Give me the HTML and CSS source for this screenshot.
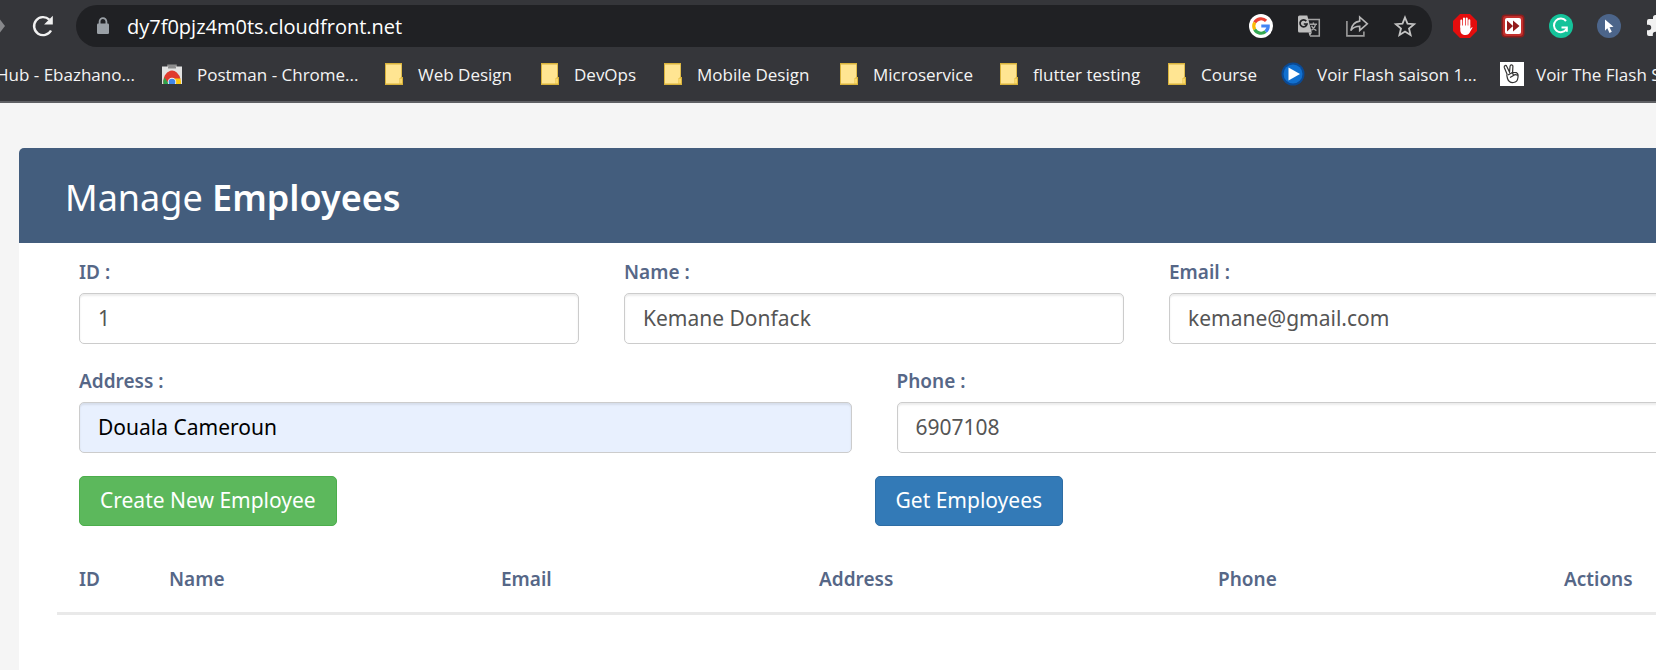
FILE: index.html
```html
<!DOCTYPE html>
<html lang="en">
<head>
<meta charset="utf-8">
<meta name="viewport" content="width=device-width, initial-scale=1">
<title>Manage Employees</title>
<link rel="stylesheet" href="styles.css">
</head>
<body>
<header class="browser">
  <div class="toolbar">
    <button class="tool tool-forward" type="button" aria-label="Forward">
      <svg width="8" height="24" viewBox="0 0 8 24"><path d="M0 5.500l5 6.500-5 6.500z" fill="#87888b"/></svg>
    </button>
    <button class="tool tool-reload" type="button" aria-label="Reload">
      <svg width="24" height="24" viewBox="0 0 24 24"><path d="M20 16.500A9 9 0 1 1 18.300 5.600" fill="none" stroke="#f1f1f1" stroke-width="2.400"/><path d="M21.800 1.800v8.700h-8.700z" fill="#f1f1f1"/></svg>
    </button>
    <div class="omnibox">
      <svg width="14" height="18" viewBox="0 0 14 18"><path d="M3.600 8V4.600a3.400 3.400 0 0 1 6.800 0V8" fill="none" stroke="#9aa0a6" stroke-width="1.800"/><rect x="1" y="6.500" width="12" height="10.500" rx="1.300" fill="#9aa0a6"/></svg>
      <input class="url" type="text" aria-label="Address bar" value="dy7f0pjz4m0ts.cloudfront.net">
      <div class="icons">
        <button class="tool" type="button" aria-label="Google">
          <svg width="24" height="24" viewBox="0 0 24 24"><circle cx="12" cy="12" r="12" fill="#fff"/><g fill="none" stroke-width="3.200"><path d="M17.100 6.900A7.200 7.200 0 0 0 5.700 8.500" stroke="#ea4335"/><path d="M5.700 8.500a7.200 7.200 0 0 0 0 7" stroke="#fbbc05"/><path d="M5.700 15.500a7.200 7.200 0 0 0 10.900 2.100" stroke="#34a853"/><path d="M12.300 12h6.900a7.200 7.200 0 0 1-2.600 5.600" stroke="#4285f4"/></g></svg>
        </button>
        <button class="tool" type="button" aria-label="Translate">
          <svg width="24" height="24" viewBox="0 0 24 24"><path d="M11 5.500h11.300V22H13" fill="none" stroke="#a3a3a3" stroke-width="1.500"/><path d="M1 3a1.500 1.500 0 0 1 1.500-1.500h7.800L14.800 18.500H2.500A1.500 1.500 0 0 1 1 17z" fill="#bdbdbd"/><path d="M11.500 18.500h3.500l-2.300 3.700z" fill="#bdbdbd"/><path d="M9.300 7.100A3.500 3.500 0 1 0 10 10H6.800" fill="none" stroke="#202124" stroke-width="1.700"/><path d="M13 10.300h7M16.400 8.500v1.800M18.600 10.400c-.5 2.500-2 4.600-4.200 6M14.600 11.700c.8 2.200 2.500 3.900 4.800 4.900" fill="none" stroke="#a3a3a3" stroke-width="1.400"/></svg>
        </button>
        <button class="tool" type="button" aria-label="Share">
          <svg width="24" height="24" viewBox="0 0 24 24"><path d="M1.900 7v14.900h17V17.500" fill="none" stroke="#9c9c9c" stroke-width="1.600"/><path d="M14.700 3l7.600 6.800-7.600 6.600v-4.100c-3.900 0-6.800 1.200-8.900 4.300.8-5.200 3.800-8.800 8.900-9.500z" fill="none" stroke="#b8b8b8" stroke-width="1.600"/></svg>
        </button>
        <button class="tool" type="button" aria-label="Bookmark this tab">
          <svg width="24" height="24" viewBox="0 0 24 24"><path d="M12 3.500l2.500 6.200 6.600.5-5.100 4.300 1.600 6.500-5.600-3.500-5.600 3.500 1.600-6.500-5.100-4.300 6.600-.5z" fill="none" stroke="#c3c3c3" stroke-width="1.800"/></svg>
        </button>
      </div>
    </div>
    <div class="icons extensions">
      <button class="tool" type="button" aria-label="AdBlock">
        <svg width="24" height="24" viewBox="0 0 24 24"><path d="M7 0h10l7 7v10l-7 7H7l-7-7V7z" fill="#e40d0d"/><path d="M8.300 13V6.500M11 12V4.500M13.700 12V4.500M16.300 12V6.300" stroke="#fff" stroke-width="2" stroke-linecap="round"/><path d="M7.300 11.500h10v3.500c1-1.300 1.400-2.100 2.300-1.700-.5 1.500-2 3.600-2.700 5-.7 1.500-2 2.700-4.300 2.700-3.400 0-5.300-2-5.300-5z" fill="#fff"/></svg>
      </button>
      <button class="tool" type="button" aria-label="Video speed">
        <svg width="24" height="24" viewBox="0 0 24 24"><rect x=".5" y=".5" width="23" height="23" rx="4" fill="#8d1d1c"/><rect x="2" y="2" width="20" height="20" rx="3" fill="#c3302d"/><rect x="4" y="4" width="16" height="16" rx="2" fill="#fff"/><path d="M6 6.500l6 5.500-6 5.500zM12 6.500l6.500 5.500-6.500 5.500z" fill="#941b1b"/></svg>
      </button>
      <button class="tool" type="button" aria-label="Grammarly">
        <svg width="24" height="24" viewBox="0 0 24 24"><circle cx="12" cy="12" r="12" fill="#15c39a"/><path d="M17 7A6.800 6.800 0 1 0 17.500 15" fill="none" stroke="#fff" stroke-width="2"/><path d="M12.500 13.400h5.300v4.400" fill="none" stroke="#fff" stroke-width="2"/></svg>
      </button>
      <button class="tool" type="button" aria-label="Cursor">
        <svg width="24" height="24" viewBox="0 0 24 24"><circle cx="12" cy="12" r="12" fill="#4c658a"/><path d="M8 5.500l8.500 7.300-4 .4 2.300 4.600-2.300 1.100-2.200-4.700L8 16.700z" fill="#fff"/></svg>
      </button>
      <button class="tool" type="button" aria-label="Extensions">
        <svg width="24" height="24" viewBox="0 0 24 24"><path d="M20.500 11H19V7a2 2 0 0 0-2-2h-4V3.500a2.500 2.500 0 0 0-5 0V5H4a2 2 0 0 0-2 2v3.800h1.500a2.700 2.700 0 0 1 0 5.400H2V20a2 2 0 0 0 2 2h3.800v-1.500a2.700 2.700 0 0 1 5.400 0V22H17a2 2 0 0 0 2-2v-4h1.500a2.500 2.500 0 0 0 0-5z" fill="#f1f1f1"/></svg>
      </button>
    </div>
  </div>
  <nav class="bookmarks" aria-label="Bookmarks">
    <a class="bookmark bookmark-cut" href="#">Hub - Ebazhano...</a>
    <a class="bookmark" href="#"><svg width="20" height="20" viewBox="0 0 20 20"><path d="M6 4V1.200h8V4" fill="none" stroke="#8f8f8f" stroke-width="1.600"/><path d="M0 2.500h20V20H0z" fill="#e2e2e2"/><path d="M6 2.500h8v2H6z" fill="#8c8c8c"/><path d="M1.500 20a8.500 11 0 0 1 17-4.500H10z" fill="#e03a2e"/><path d="M1.500 20a9 9 0 0 1 1-6.500L7 20z" fill="#2fa24c"/><path d="M10 14.500h8.300A10 10 0 0 1 19 20H10z" fill="#fbc811"/><circle cx="10" cy="18" r="4.200" fill="#f4f4f4"/><circle cx="10" cy="18" r="3.300" fill="#3f86e8"/></svg>Postman - Chrome...</a>
    <a class="bookmark" href="#"><svg class="folder" width="18" height="22" viewBox="0 0 18 22"><use href="#folder"/></svg>Web Design</a>
    <a class="bookmark" href="#"><svg class="folder" width="18" height="22" viewBox="0 0 18 22"><use href="#folder"/></svg>DevOps</a>
    <a class="bookmark" href="#"><svg class="folder" width="18" height="22" viewBox="0 0 18 22"><use href="#folder"/></svg>Mobile Design</a>
    <a class="bookmark" href="#"><svg class="folder" width="18" height="22" viewBox="0 0 18 22"><use href="#folder"/></svg>Microservice</a>
    <a class="bookmark" href="#"><svg class="folder" width="18" height="22" viewBox="0 0 18 22"><use href="#folder"/></svg>flutter testing</a>
    <a class="bookmark" href="#"><svg class="folder" width="18" height="22" viewBox="0 0 18 22"><defs><g id="folder"><path d="M0 0h17v14h1v8H0z" fill="#d9b33c"/><path d="M1 1.500h15.200v12.800l-1.700 1v5.200H1z" fill="#ffe592"/><path d="M14.500 20.500v-5h2.500v5z" fill="#fbd96b"/></g></defs><use href="#folder"/></svg>Course</a>
    <a class="bookmark bookmark-wide" href="#"><svg width="24" height="24" viewBox="0 0 24 24"><circle cx="12" cy="12" r="11.500" fill="#0b4a94"/><circle cx="12" cy="12" r="9.500" fill="#1170cf"/><path d="M7.500 5.500L19 12 7.500 18.500z" fill="#fff"/></svg>Voir Flash saison 1...</a>
    <a class="bookmark bookmark-wide" href="#"><svg width="24" height="24" viewBox="0 0 24 24"><path d="M0 0h24v24H0z" fill="#fff"/><path d="M7 12L4.300 5.500c-.5-2 1.700-2.800 2.500-1L9.500 10l.6-6c.3-1.800 2.900-1.500 2.800.3l-.3 6 3.900.4c1.600.7 1.900 2 1.500 4.500-.3 3-1.500 5-4.500 5.300-3.500.3-5.200-1.300-6-4-.6-2-.9-3.500-.5-4.500zM8 13l4.500-2.500 1 3-3.500 2M13.500 13.500c1-1 2.500-1 4-.2" fill="none" stroke="#333" stroke-width="1.200"/></svg>Voir The Flash S</a>
  </nav>
</header>
<main class="page">
  <section class="card">
    <h2 class="card-title">Manage <b>Employees</b></h2>
    <div class="card-body">
      <form>
        <div class="row thirds">
          <div class="field"><label for="id">ID :</label><input id="id" type="text" value="1"></div>
          <div class="field"><label for="name">Name :</label><input id="name" type="text" value="Kemane Donfack"></div>
          <div class="field"><label for="email">Email :</label><input id="email" type="text" value="kemane@gmail.com"></div>
        </div>
        <div class="row halves">
          <div class="field"><label for="address">Address :</label><input id="address" class="filled" type="text" value="Douala Cameroun"></div>
          <div class="field"><label for="phone">Phone :</label><input id="phone" type="text" value="6907108"></div>
        </div>
        <div class="row halves">
          <div class="action-first"><button class="btn btn-success" type="button">Create New Employee</button></div>
          <div><button class="btn btn-primary" type="button">Get Employees</button></div>
        </div>
      </form>
      <table class="employees">
        <colgroup><col class="c-id"><col class="c-name"><col class="c-email"><col class="c-address"><col class="c-phone"><col></colgroup>
        <thead><tr><th>ID</th><th>Name</th><th>Email</th><th>Address</th><th>Phone</th><th>Actions</th></tr></thead>
        <tbody></tbody>
      </table>
    </div>
  </section>
</main>
</body>
</html>
```
FILE: styles.css
```css
* { box-sizing: border-box; }

body {
  display: flex;
  flex-direction: column;
  margin: 0;
  min-height: 100vh;
  overflow-x: hidden;
  background: #f5f5f5;
  color: #566787;
  font-family: "Noto Sans", "Open Sans", sans-serif;
  font-size: 20px;
}

/* Browser chrome */
.browser {
  background: #35363a;
  border-bottom: 2px solid #5f6064;
  font-family: "Open Sans", "Noto Sans", sans-serif;
  color: #f4f4f4;
}

.toolbar {
  display: flex;
  align-items: center;
  padding-top: 5px;
}

.tool {
  display: block;
  flex: none;
  padding: 0;
  border: 0;
  background: none;
}

.tool svg,
.omnibox svg,
.bookmark svg { display: block; flex: none; }

.tool-reload { margin: 0 21px 0 23px; }

.omnibox {
  display: flex;
  flex: 1;
  align-items: center;
  height: 42px;
  padding: 0 15px 0 20px;
  border-radius: 21px;
  background: #202124;
}

.url {
  flex: 1;
  min-width: 0;
  margin-left: 17px;
  padding: 0;
  border: 0;
  outline: 0;
  background: none;
  color: #fff;
  font: inherit;
  font-size: 20px;
}

.icons {
  display: flex;
  gap: 24px;
}

.extensions {
  flex: 0 0 224px;
  padding-left: 21px;
  overflow: hidden;
}

.bookmarks {
  display: grid;
  grid-template-columns: 162px 223px 156px 123px 176px 160px 168px 113px 219px 1fr;
  height: 54px;
  font-size: 17px;
  overflow: hidden;
}

.bookmark {
  display: flex;
  align-items: center;
  gap: 15px;
  color: inherit;
  text-decoration: none;
  white-space: nowrap;
}

.bookmark-cut { margin-left: -4px; }
.bookmark-wide { gap: 12px; }

/* Employee page */
.page {
  display: flex;
  flex: 1;
  flex-direction: column;
  padding: 45px 0 0 19px;
}

.card {
  flex: 1;
  margin-right: -74px;
  border-radius: 5px 5px 0 0;
  background: #fff;
}

.card-title {
  margin: 0;
  padding: 26px 46px 21px;
  border-radius: 5px 5px 0 0;
  background: #435d7d;
  color: #fff;
  font-size: 36px;
  font-weight: 400;
  line-height: 48px;
}

.card-title b { font-weight: 600; }

.card-body { padding: 15px 38px 0; }

.row { display: grid; }
.thirds { grid-template-columns: repeat(3, 1fr); }
.halves { grid-template-columns: repeat(2, 1fr); }

.field { padding: 0 23px 23px 22px; }

.field label {
  display: block;
  margin-bottom: 7px;
  font-size: 19px;
  font-weight: 600;
  line-height: 28px;
}

.field input {
  display: block;
  width: 100%;
  height: 51px;
  padding: 0 18px 2px;
  border: 1px solid #ccc;
  border-radius: 5px;
  outline: 0;
  background: #fff;
  box-shadow: inset 0 2px 2px rgba(0, 0, 0, 0.08);
  color: #555;
  font: inherit;
  font-size: 21px;
}

.field .filled {
  background: #e8f0fe;
  color: #000;
}

.action-first { padding-left: 22px; }

.btn {
  display: block;
  height: 50px;
  padding: 0 20px 2px;
  border: 1px solid;
  border-radius: 5px;
  color: #fff;
  font: inherit;
  font-size: 21px;
}

.btn-success { border-color: #4cae4c; background: #5cb85c; }
.btn-primary { border-color: #2e6da4; background: #337ab7; }

.employees {
  width: 100%;
  margin-top: 23px;
  border-collapse: collapse;
  table-layout: fixed;
}

.employees th {
  padding: 15px 0 18px 22px;
  border-bottom: 3px solid #e9e9e9;
  font-size: 19px;
  font-weight: 600;
  line-height: 30px;
  text-align: left;
}

.c-id { width: 90px; }
.c-name { width: 332px; }
.c-email { width: 318px; }
.c-address { width: 399px; }
.c-phone { width: 346px; }
```
